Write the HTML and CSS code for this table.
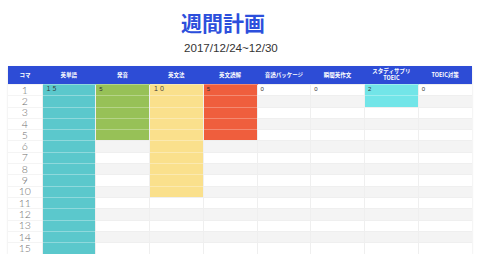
FILE: index.html
```html
<!DOCTYPE html>
<html lang="ja">
<head>
<meta charset="utf-8">
<link rel="stylesheet" href="styles.css">
</head>
<body>
<div class="page">
  <h1 class="title">週間計画</h1>
  <div class="date">2017/12/24~12/30</div>
  <table class="plan">
    <thead>
      <tr>
        <th class="c-num">コマ</th>
        <th>英単語</th>
        <th>発音</th>
        <th>英文法</th>
        <th>英文読解</th>
        <th>音読パッケージ</th>
        <th>瞬間英作文</th>
        <th>スタディサプリ<br>TOEIC</th>
        <th>TOEIC対策</th>
      </tr>
    </thead>
    <tbody>
      <tr><td class="num">1</td><td class="teal">１５</td><td class="green">5</td><td class="yellow">１０</td><td class="red">5</td><td>0</td><td>0</td><td class="cyan">2</td><td>0</td></tr>
      <tr><td class="num">2</td><td class="teal"></td><td class="green"></td><td class="yellow"></td><td class="red"></td><td></td><td></td><td class="cyan"></td><td></td></tr>
      <tr><td class="num">3</td><td class="teal"></td><td class="green"></td><td class="yellow"></td><td class="red"></td><td></td><td></td><td></td><td></td></tr>
      <tr><td class="num">4</td><td class="teal"></td><td class="green"></td><td class="yellow"></td><td class="red"></td><td></td><td></td><td></td><td></td></tr>
      <tr><td class="num">5</td><td class="teal"></td><td class="green"></td><td class="yellow"></td><td class="red"></td><td></td><td></td><td></td><td></td></tr>
      <tr><td class="num">6</td><td class="teal"></td><td></td><td class="yellow"></td><td></td><td></td><td></td><td></td><td></td></tr>
      <tr><td class="num">7</td><td class="teal"></td><td></td><td class="yellow"></td><td></td><td></td><td></td><td></td><td></td></tr>
      <tr><td class="num">8</td><td class="teal"></td><td></td><td class="yellow"></td><td></td><td></td><td></td><td></td><td></td></tr>
      <tr><td class="num">9</td><td class="teal"></td><td></td><td class="yellow"></td><td></td><td></td><td></td><td></td><td></td></tr>
      <tr><td class="num">10</td><td class="teal"></td><td></td><td class="yellow"></td><td></td><td></td><td></td><td></td><td></td></tr>
      <tr><td class="num">11</td><td class="teal"></td><td></td><td></td><td></td><td></td><td></td><td></td><td></td></tr>
      <tr><td class="num">12</td><td class="teal"></td><td></td><td></td><td></td><td></td><td></td><td></td><td></td></tr>
      <tr><td class="num">13</td><td class="teal"></td><td></td><td></td><td></td><td></td><td></td><td></td><td></td></tr>
      <tr><td class="num">14</td><td class="teal"></td><td></td><td></td><td></td><td></td><td></td><td></td><td></td></tr>
      <tr><td class="num">15</td><td class="teal"></td><td></td><td></td><td></td><td></td><td></td><td></td><td></td></tr>
    </tbody>
  </table>
</div>
</body>
</html>
```

FILE: styles.css
```css
html, body {
  margin: 0;
  padding: 0;
  background: #ffffff;
}

.page {
  padding: 9px 8px 0 8px;
  font-family: "Liberation Sans", "Noto Sans CJK JP", sans-serif;
}

.title {
  margin: 0;
  padding-left: 173px;
  font-family: "Noto Sans CJK JP", sans-serif;
  font-size: 21px;
  line-height: 26px;
  font-weight: 700;
  color: #2c4fdc;
}

.date {
  margin: 5px 0 0 0;
  padding-left: 176px;
  font-size: 11.6px;
  line-height: 16px;
  color: #333333;
}

.plan {
  margin-top: 10px;
  width: 464px;
  table-layout: fixed;
  border-collapse: collapse;
  box-shadow: 0 1px 2px rgba(0, 0, 0, 0.12);
}

.plan th {
  background: #2d4cd6;
  color: #ffffff;
  font-family: "Noto Sans CJK JP", sans-serif;
  font-size: 5.5px;
  line-height: 7px;
  font-weight: 700;
  height: 18px;
  padding: 0;
  text-align: center;
  vertical-align: middle;
  width: 53.75px;
}

.plan th.c-num {
  width: 34px;
}

.plan tbody tr {
  height: 11.3px;
}

.plan td {
  height: 11.3px;
  padding: 1px 0 0 3px;
  box-sizing: border-box;
  border-left: 1px solid #efefef;
  border-top: 1px solid #efefef;
  font-family: "Liberation Sans", "Noto Sans CJK JP", sans-serif;
  font-size: 6px;
  line-height: 6px;
  color: #333333;
  text-align: left;
  vertical-align: top;
  overflow: hidden;
}

.plan tbody tr:nth-child(even) td {
  background: #f4f4f4;
}

.plan tbody tr td.num {
  background: #ffffff;
  font-family: "Lato", "Liberation Sans", sans-serif;
  font-weight: 300;
  font-size: 10.5px;
  line-height: 9px;
  color: #6e6e6e;
  text-align: center;
  vertical-align: middle;
  padding: 0;
  border-left: none;
  border-top: 1px solid #f4f4f4;
}

.plan tbody tr td.teal { background: #5bc8cc; border-top-color: #8fd9dc; }
.plan tbody tr td.green { background: #97c157; border-top-color: #b5d488; }
.plan tbody tr td.yellow { background: #fae08c; border-top-color: #fbe9b0; }
.plan tbody tr td.red { background: #ef5e3d; border-top-color: #f38a72; }
.plan tbody tr td.cyan { background: #72e5e8; border-top-color: #9eedef; }
```
